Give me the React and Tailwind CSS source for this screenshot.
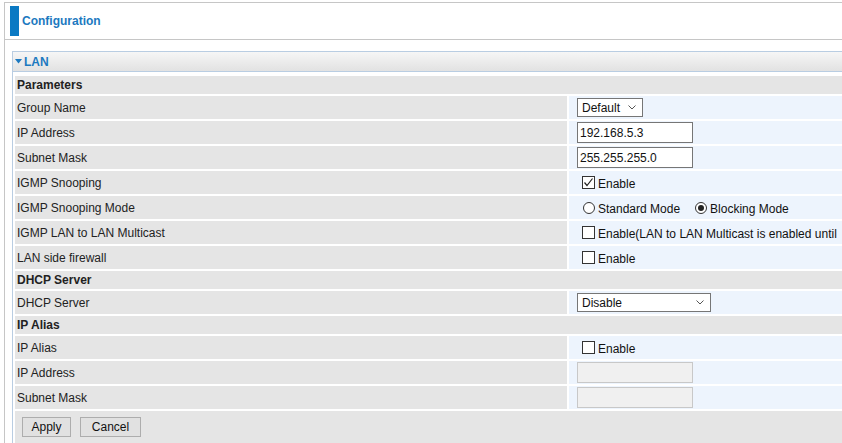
import React from 'react';

function Checkbox({ checked }) {
  return (
    <span className="inline-flex items-center justify-center w-[13px] h-[13px] border border-[#333] bg-white shrink-0">
      {checked && (
        <svg width="11" height="11" viewBox="0 0 11 11">
          <path d="M1.5 5.5 L4 8.5 L9.5 1.5" fill="none" stroke="#222" strokeWidth="1.2" />
        </svg>
      )}
    </span>
  );
}

function Radio({ checked }) {
  return (
    <span className="inline-flex items-center justify-center w-[12px] h-[12px] rounded-full border border-[#333] bg-white shrink-0">
      {checked && <span className="w-[6px] h-[6px] rounded-full bg-[#222]" />}
    </span>
  );
}

function Select({ value, width }) {
  return (
    <div className={`flex items-center justify-between h-[19px] border border-[#767676] bg-white pl-[4px] pr-[6px] ${width}`}>
      <span>{value}</span>
      <svg width="8" height="5" viewBox="0 0 8 5">
        <path d="M0.5 0.5 L4 4 L7.5 0.5" fill="none" stroke="#555" strokeWidth="1" />
      </svg>
    </div>
  );
}

function TextInput({ value, disabled }) {
  return (
    <div
      className={
        disabled
          ? 'w-[116px] h-[21px] border border-[#c8c8c8] bg-[#f0f0f0]'
          : 'w-[116px] h-[21px] border border-[#767676] bg-white pl-[2px] flex items-center'
      }
    >
      {value}
    </div>
  );
}

function CheckLabel({ checked, children }) {
  return (
    <span className="ml-[5px] flex items-center gap-[3px]">
      <Checkbox checked={checked} />
      <span className="pt-[3px]">{children}</span>
    </span>
  );
}

function Section({ title }) {
  return (
    <div className="col-span-2 h-[18px] bg-[#e5e5e5] pl-[2px] flex items-center font-bold text-[#222]">
      {title}
    </div>
  );
}

function Row({ label, children }) {
  return (
    <>
      <div className="h-[23px] bg-[#e5e5e5] pl-[2px] flex items-center text-[#222]">{label}</div>
      <div className="h-[23px] bg-[#edf4fd] pl-[8px] flex items-center text-[#111] whitespace-nowrap">{children}</div>
    </>
  );
}

function App() {
  return (
    <div className="w-screen h-screen overflow-hidden bg-white font-['Liberation_Sans',Arial,sans-serif] text-[12px]">
      <div className="ml-[4px] mt-[2px] w-[1100px] h-[500px] border-l border-t border-[#c6c6c6]">
        {/* page title */}
        <div className="h-[37px] border-b border-[#c6c6c6] pt-[3px] pl-[5px]">
          <div className="flex items-center gap-[3px]">
            <div className="w-[9px] h-[30px] bg-[#0a79c3]" />
            <span className="font-bold text-[#1c79c0]">Configuration</span>
          </div>
        </div>

        {/* LAN panel */}
        <div className="ml-[7px] mt-[11px] border-l border-[#b9cde2]">
          <div className="h-[21px] border-y border-[#b9cde2] bg-gradient-to-b from-[#f6f6f6] to-[#e2e2e2] pl-[2px] flex items-center gap-[2px]">
            <svg width="7" height="5" viewBox="0 0 7 5">
              <path d="M0 0 L7 0 L3.5 4.5 Z" fill="#1c79c0" />
            </svg>
            <span className="font-bold text-[#1c79c0]">LAN</span>
          </div>

          <div className="pl-[2px] pt-[4px] grid grid-cols-[552px_1fr] gap-[2px]">
            <Section title="Parameters" />
            <Row label="Group Name">
              <Select value="Default" width="w-[66px]" />
            </Row>
            <Row label="IP Address">
              <TextInput value="192.168.5.3" />
            </Row>
            <Row label="Subnet Mask">
              <TextInput value="255.255.255.0" />
            </Row>
            <Row label="IGMP Snooping">
              <CheckLabel checked>Enable</CheckLabel>
            </Row>
            <Row label="IGMP Snooping Mode">
              <span className="ml-[6px] flex items-center gap-[3px]">
                <Radio />
                <span className="pt-[2px]">Standard Mode</span>
              </span>
              <span className="ml-[15px] flex items-center gap-[3px]">
                <Radio checked />
                <span className="pt-[2px]">Blocking Mode</span>
              </span>
            </Row>
            <Row label="IGMP LAN to LAN Multicast">
              <CheckLabel>Enable(LAN to LAN Multicast is enabled until</CheckLabel>
            </Row>
            <Row label="LAN side firewall">
              <CheckLabel>Enable</CheckLabel>
            </Row>

            <Section title="DHCP Server" />
            <Row label="DHCP Server">
              <Select value="Disable" width="w-[134px]" />
            </Row>

            <Section title="IP Alias" />
            <Row label="IP Alias">
              <CheckLabel>Enable</CheckLabel>
            </Row>
            <Row label="IP Address">
              <TextInput disabled />
            </Row>
            <Row label="Subnet Mask">
              <TextInput disabled />
            </Row>

            <div className="col-span-2 h-[60px] bg-[#e5e5e5] pl-[7px] pt-[6px] flex items-start gap-[9px]">
              <button className="w-[49px] h-[20px] bg-[#e1e1e1] border border-[#adadad] text-[#111]">Apply</button>
              <button className="w-[61px] h-[20px] bg-[#e1e1e1] border border-[#adadad] text-[#111]">Cancel</button>
            </div>
          </div>
        </div>
      </div>
    </div>
  );
}

export default App;
